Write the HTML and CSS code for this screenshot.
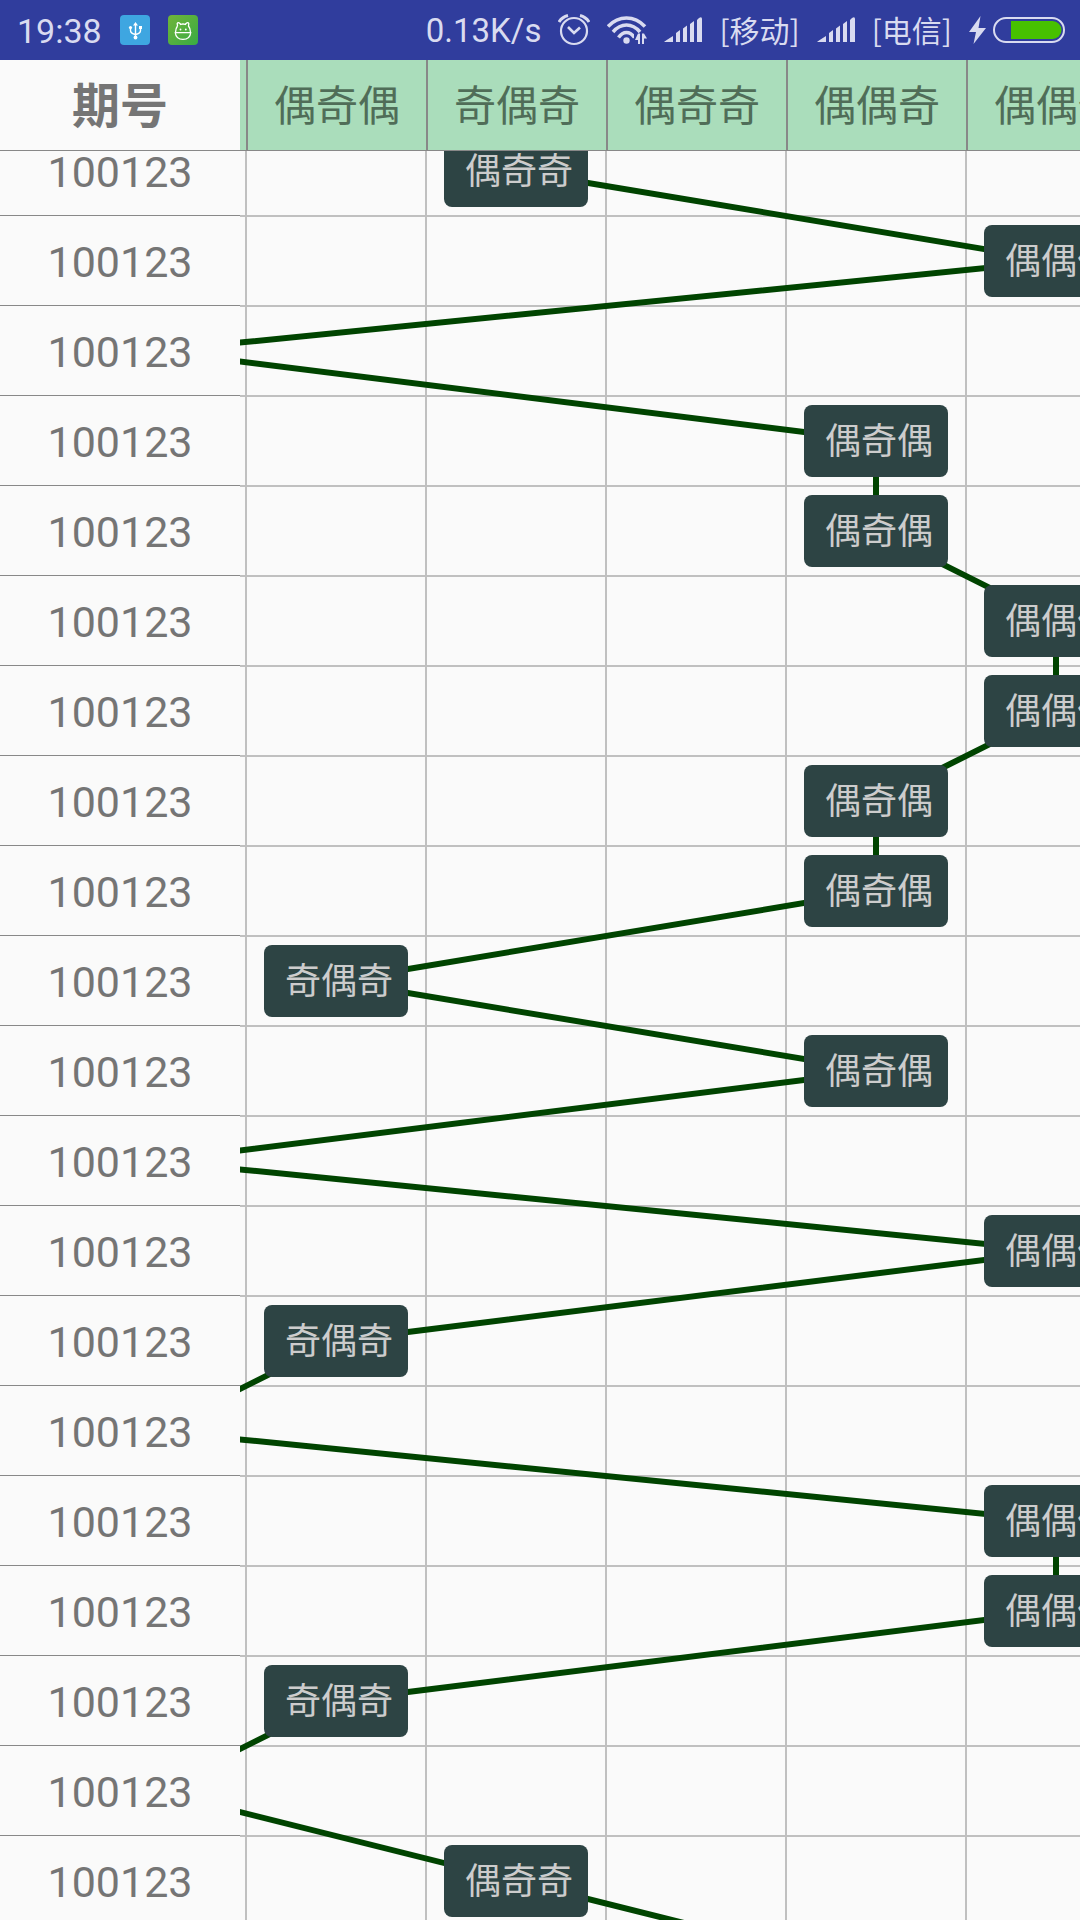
FILE: index.html
```html
<!DOCTYPE html>
<html lang="zh-CN">
<head>
<meta charset="utf-8">
<meta name="viewport" content="width=device-width, initial-scale=1">
<title>走势图</title>
<link rel="stylesheet" href="styles.css">
</head>
<body>
<header class="status">
  <div class="status-left">
    <time class="clock">19:38</time>
    <svg class="app-icon" viewBox="0 0 30 30" aria-hidden="true">
      <rect width="30" height="30" rx="4" fill="#3ea6e1"/>
      <g fill="none" stroke="#fff" stroke-width="1.4"><path d="M15.500 9V23M10.500 13V15.500Q10.500 18.500 15.500 19.500Q20.500 18.500 20.500 15.500V13"/></g>
      <g fill="#fff"><path d="M15.500 7L18 10.500H13z"/><circle cx="10.500" cy="12.500" r="1.600"/><rect x="19" y="11" width="3" height="3"/><circle cx="15.500" cy="22.500" r="1.900"/></g>
    </svg>
    <svg class="app-icon" viewBox="0 0 30 30" aria-hidden="true">
      <defs><linearGradient id="leaf" x1="0" y1="0" x2="1" y2="1"><stop offset="0" stop-color="#70b439"/><stop offset="1" stop-color="#38ab44"/></linearGradient></defs>
      <rect width="30" height="30" rx="4" fill="url(#leaf)"/>
      <g fill="none" stroke="#fff" stroke-width="1.300"><path d="M9.500 11L9.200 8.500Q10 6.800 12 8.500L12.500 9.500Q15 8.500 17.500 9.500L18 8.500Q20 6.800 20.800 8.500L20.500 11Q22.500 13.500 22.500 17.200M7.500 17.200Q7.500 13.500 9.500 11"/><path d="M7.300 17.700H22.700Q22 24.300 15 24.300Q8 24.300 7.300 17.700z"/></g>
      <g fill="#fff"><circle cx="12.500" cy="14.500" r="0.900"/><circle cx="17.800" cy="14.500" r="0.900"/></g>
    </svg>
  </div>
  <div class="status-right">
    <span class="speed">0.13K/s</span>
    <svg class="alarm" viewBox="0 0 32 32" aria-hidden="true">
      <g fill="none" stroke="#d9dbf0"><circle cx="16" cy="17" r="13" stroke-width="2.200"/><path stroke-width="2.600" d="M10 13L16 19L22 13.500"/><path stroke-width="3" d="M1 8Q4 3 10 1.500M31 8Q28 3 22 1.500"/></g>
    </svg>
    <svg class="wifi" viewBox="0 0 40 30" aria-hidden="true">
      <g fill="none" stroke="#d9dbf0" stroke-width="3.500"><path d="M1 11.500Q9 3 19.500 3T38 11.500"/><path d="M6 17Q12 10 19.500 10T33 17"/><path d="M11.500 22.500Q15 17.500 19.500 17.500T27.500 22.500"/></g>
      <circle cx="19.500" cy="25.500" r="3.200" fill="#d9dbf0"/>
      <path fill="#303d9d" d="M27 19h13v11H27z"/>
      <path fill="#d9dbf0" d="M31 18.500h2V29h-2v-4h-3zM35 18.500h2l3 5h-3V29h-2z"/>
    </svg>
    <svg class="signal" viewBox="0 0 38 26" aria-hidden="true"><path fill="#d9dbf0" d="M0 25Q1 24 9 19V25zM12 16L16 13V25H12zM19 11.500L23 8.500V25H19zM26 7L30 4V25H26zM33 3L35 1Q38 -1 38 2V25H33z"/></svg>
    <span class="carrier">[移动]</span>
    <svg class="signal" viewBox="0 0 38 26" aria-hidden="true"><path fill="#d9dbf0" d="M0 25Q1 24 9 19V25zM12 16L16 13V25H12zM19 11.500L23 8.500V25H19zM26 7L30 4V25H26zM33 3L35 1Q38 -1 38 2V25H33z"/></svg>
    <span class="carrier">[电信]</span>
    <svg class="battery" viewBox="0 0 96 30" aria-hidden="true">
      <path fill="#d9dbf0" d="M11.500 1L0 17H7L4.500 29L17 13H9.500z"/>
      <rect x="25" y="3" width="70" height="24" rx="12" fill="none" stroke="#d9dbf0" stroke-width="2"/>
      <path fill="#47c100" d="M42 6H83.500A9 9 0 0 1 83.500 24H42z"/>
    </svg>
  </div>
</header>
<main class="trend">
  <div class="corner">期号</div>
  <div class="heads">
    <table class="grid head-grid">
      <tr><td class="gutter"></td><th scope="col">偶奇偶</th><th scope="col">奇偶奇</th><th scope="col">偶奇奇</th><th scope="col">偶偶奇</th><th scope="col">偶偶偶</th></tr>
    </table>
  </div>
  <div class="issues">
    <ol class="issue-list">
      <li>100123</li><li>100123</li><li>100123</li><li>100123</li><li>100123</li>
      <li>100123</li><li>100123</li><li>100123</li><li>100123</li><li>100123</li>
      <li>100123</li><li>100123</li><li>100123</li><li>100123</li><li>100123</li>
      <li>100123</li><li>100123</li><li>100123</li><li>100123</li><li>100123</li>
    </ol>
  </div>
  <div class="chart">
    <div class="canvas">
      <table class="grid body-grid">
        <tr><td class="gutter"></td><td></td><td><span class="node">偶奇奇</span></td><td></td><td></td><td></td></tr>
        <tr><td class="gutter"></td><td></td><td></td><td></td><td></td><td><span class="node">偶偶偶</span></td></tr>
        <tr><td class="gutter"></td><td></td><td></td><td></td><td></td><td></td></tr>
        <tr><td class="gutter"></td><td></td><td></td><td></td><td><span class="node">偶奇偶</span></td><td></td></tr>
        <tr><td class="gutter"></td><td></td><td></td><td></td><td><span class="node">偶奇偶</span></td><td></td></tr>
        <tr><td class="gutter"></td><td></td><td></td><td></td><td></td><td><span class="node">偶偶偶</span></td></tr>
        <tr><td class="gutter"></td><td></td><td></td><td></td><td></td><td><span class="node">偶偶偶</span></td></tr>
        <tr><td class="gutter"></td><td></td><td></td><td></td><td><span class="node">偶奇偶</span></td><td></td></tr>
        <tr><td class="gutter"></td><td></td><td></td><td></td><td><span class="node">偶奇偶</span></td><td></td></tr>
        <tr><td class="gutter"></td><td><span class="node">奇偶奇</span></td><td></td><td></td><td></td><td></td></tr>
        <tr><td class="gutter"></td><td></td><td></td><td></td><td><span class="node">偶奇偶</span></td><td></td></tr>
        <tr><td class="gutter"></td><td></td><td></td><td></td><td></td><td></td></tr>
        <tr><td class="gutter"></td><td></td><td></td><td></td><td></td><td><span class="node">偶偶偶</span></td></tr>
        <tr><td class="gutter"></td><td><span class="node">奇偶奇</span></td><td></td><td></td><td></td><td></td></tr>
        <tr><td class="gutter"></td><td></td><td></td><td></td><td></td><td></td></tr>
        <tr><td class="gutter"></td><td></td><td></td><td></td><td></td><td><span class="node">偶偶偶</span></td></tr>
        <tr><td class="gutter"></td><td></td><td></td><td></td><td></td><td><span class="node">偶偶偶</span></td></tr>
        <tr><td class="gutter"></td><td><span class="node">奇偶奇</span></td><td></td><td></td><td></td><td></td></tr>
        <tr><td class="gutter"></td><td></td><td></td><td></td><td></td><td></td></tr>
        <tr><td class="gutter"></td><td></td><td><span class="node">偶奇奇</span></td><td></td><td></td><td></td></tr>
      </table>
      <svg class="links" aria-hidden="true">
        <polyline points="276,44 816,134 -84,224 636,314 636,404 816,494 816,584 636,674 636,764 96,854 636,944 -84,1034 816,1124 96,1214 -84,1304 816,1394 816,1484 96,1574 -84,1664 276,1754 636,1844"/>
      </svg>
    </div>
  </div>
</main>
</body>
</html>
```
FILE: styles.css
```css
* {
  box-sizing: border-box;
}

body {
  margin: 0;
  height: 100vh;
  display: flex;
  flex-direction: column;
  overflow: hidden;
  background: #fafafa;
  color: #757575;
  font-family: Roboto, "Noto Sans CJK SC", sans-serif;
}

/* System status bar */
.status {
  flex: none;
  height: 60px;
  padding: 0 15px 0 17px;
  display: flex;
  align-items: center;
  justify-content: space-between;
  background: #303d9d;
  color: #d9dbf0;
  white-space: nowrap;
}

.status-left,
.status-right {
  display: flex;
  align-items: center;
}

.status-left {
  gap: 18px;
}

.status-right {
  gap: 17px;
}

.clock,
.speed {
  padding-top: 2px;
  line-height: 40px;
}

.clock {
  font-size: 34px;
}

.speed {
  font-size: 33px;
}

.carrier {
  padding-bottom: 2px;
  font-family: "Noto Sans CJK SC", sans-serif;
  font-size: 30px;
  line-height: 40px;
}

.app-icon {
  width: 30px;
  height: 30px;
}

.alarm {
  width: 32px;
  height: 32px;
}

.wifi {
  width: 40px;
  height: 30px;
}

.signal {
  width: 38px;
  height: 26px;
}

.battery {
  width: 96px;
  height: 30px;
}

/* Trend table: frozen header row and frozen first column */
.trend {
  flex: 1;
  min-height: 0;
  display: grid;
  grid-template-columns: 240px minmax(0, 1fr);
  grid-template-rows: 91px minmax(0, 1fr);
}

.corner,
.heads {
  border-bottom: 1px solid #888;
}

.corner {
  display: flex;
  align-items: center;
  justify-content: center;
  padding-bottom: 6px;
  font-size: 48px;
  font-weight: 700;
}

.heads,
.issues,
.chart {
  overflow: hidden;
}

.heads {
  background: #aaddbb;
}

.grid {
  table-layout: fixed;
  border-collapse: separate;
  border-spacing: 0;
}

.grid th,
.grid td {
  width: 180px;
  height: 90px;
  padding: 0;
  text-align: center;
  vertical-align: middle;
}

.head-grid {
  width: 906px;
}

.head-grid .gutter {
  width: 6px;
}

.head-grid th {
  padding-top: 4px;
  border-left: 2px solid #888;
  color: #506d58;
  font-size: 42px;
  font-weight: 400;
  line-height: 48px;
}

.issue-list {
  list-style: none;
  margin: -25px 0 0;
  padding: 0;
}

.issue-list li {
  height: 90px;
  padding-top: 2px;
  border-bottom: 1px solid #888;
  display: flex;
  align-items: center;
  justify-content: center;
  font-size: 43px;
}

.canvas {
  position: relative;
  margin-top: -24px;
}

.body-grid {
  width: 905px;
}

.body-grid td {
  border-left: 2px solid #c0c0c0;
  border-bottom: 2px solid #c0c0c0;
}

.body-grid .gutter {
  width: 5px;
  border-left: 0;
}

.links {
  position: absolute;
  top: 0;
  left: 0;
  width: 100%;
  height: 100%;
}

.links polyline {
  fill: none;
  stroke: #004400;
  stroke-width: 6;
}

.node {
  position: relative;
  z-index: 1;
  display: flex;
  align-items: center;
  justify-content: center;
  width: 144px;
  height: 72px;
  margin: 0 auto;
  padding: 0 0 6px 6px;
  border-radius: 8px;
  background: #2d4444;
  color: #cccccc;
  font-size: 36px;
}
```
